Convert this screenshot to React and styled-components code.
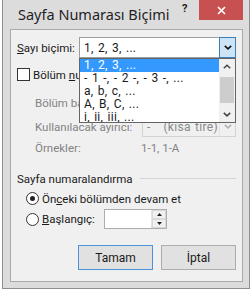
import React from 'react';
import styled, { createGlobalStyle } from 'styled-components';

const Global = createGlobalStyle`
  html, body { margin: 0; padding: 0; background: #ffffff; }
  body {
    width: 251px; height: 289px; overflow: hidden;
    font-family: Roboto, "Noto Sans", sans-serif;
    font-size: 11.5px; color: #1a1a1a;
  }
  * { box-sizing: border-box; }
`;

const Window = styled.div`
  margin-left: 2px;
  width: 248px;
  height: 289px;
  border: 1px solid #8e8e8e;
  border-top: none;
  background: #dcdcdc;
  padding: 0 6px 6px 7px;
  display: flex;
  flex-direction: column;
`;

const TitleBar = styled.div`
  height: 29px;
  display: flex;
  align-items: flex-start;
`;

const Title = styled.div`
  flex: 1;
  padding: 5px 0 0 8px;
  font-family: "Noto Sans", sans-serif;
  font-size: 14.5px;
  color: #1f1f1f;
  line-height: 18px;
`;

const HelpGlyph = styled.div`
  width: 17px;
  padding-top: 2px;
  font-size: 11px;
  font-weight: 700;
  color: #222;
`;

const CloseBtn = styled.div`
  width: 44px;
  height: 20px;
  background: #c75050;
  display: flex;
  align-items: center;
  justify-content: center;
`;

const Client = styled.div`
  flex: 1;
  border: 1px solid #a9a9a9;
  background: #f0f0f0;
  padding: 0 6px 0 6px;
  display: flex;
  flex-direction: column;
`;

const Row = styled.div`
  position: relative;
  display: flex;
  align-items: center;
  margin-top: ${p => p.$top}px;
  height: ${p => p.$h}px;
  padding-left: ${p => p.$indent || 0}px;
  color: ${p => (p.$disabled ? '#838383' : '#1a1a1a')};
  white-space: nowrap;
`;

const Label = styled.div`
  width: ${p => p.$w}px;
  flex: none;
`;

const Combo = styled.div`
  position: relative;
  width: ${p => p.$w}px;
  height: 21px;
  flex: none;
  display: flex;
  border: 1px solid ${p => (p.$disabled ? '#d3d3d3' : '#9e9e9e')};
  background: ${p => (p.$disabled ? '#f0f0f0' : '#ffffff')};
  color: ${p => (p.$disabled ? '#8a8a8a' : '#1a1a1a')};
  margin-left: auto;
  font-size: 12px;
`;

const ComboText = styled.div`
  flex: 1;
  padding-left: 4px;
  display: flex;
  align-items: center;
  white-space: pre;
  letter-spacing: 0.3px;
  word-spacing: 1px;
`;

const ComboButton = styled.div`
  width: 17px;
  margin: -1px -1px -1px 0;
  display: flex;
  align-items: center;
  justify-content: center;
  background: ${p => (p.$active ? '#cde4f7' : 'transparent')};
  border: 1px solid ${p => (p.$active ? '#3d7fb7' : 'transparent')};
  border-left: 1px solid ${p => (p.$active ? '#3d7fb7' : '#e3e3e3')};
`;

const DropList = styled.div`
  position: absolute;
  left: -1px;
  top: 20px;
  width: 157px;
  height: 65px;
  border: 1px solid #646464;
  background: #ffffff;
  display: flex;
  z-index: 5;
`;

const Items = styled.div`
  flex: 1;
  overflow: hidden;
  display: flex;
  flex-direction: column;
`;

const Item = styled.div`
  height: 13px;
  line-height: 13px;
  padding-left: 4px;
  flex: none;
  letter-spacing: 0.3px;
  word-spacing: 1px;
  background: ${p => (p.$sel ? '#3399ff' : 'transparent')};
  color: ${p => (p.$sel ? '#ffffff' : '#1a1a1a')};
`;

const ScrollBar = styled.div`
  width: 16px;
  background: #f0f0f0;
  display: flex;
  flex-direction: column;
  align-items: center;
`;

const ScrollArrow = styled.div`
  height: 15px;
  width: 100%;
  display: flex;
  align-items: center;
  justify-content: center;
  margin-top: ${p => (p.$bottom ? 'auto' : '0')};
`;

const Thumb = styled.div`
  width: 14px;
  height: 26px;
  margin-top: 3px;
  background: #cdcdcd;
`;

const Check = styled.div`
  width: 13px;
  height: 13px;
  border: 1px solid #333;
  background: #fff;
  margin-right: 3px;
  flex: none;
`;

const Radio = styled.div`
  width: 13px;
  height: 13px;
  border-radius: 50%;
  border: 1px solid #333;
  background: #fff;
  margin-right: 3px;
  flex: none;
  display: flex;
  align-items: center;
  justify-content: center;
  &::after {
    content: '';
    display: ${p => (p.$on ? 'block' : 'none')};
    width: 5px;
    height: 5px;
    border-radius: 50%;
    background: #222;
  }
`;

const GroupLine = styled.div`
  flex: 1;
  height: 1px;
  background: #d5d5d5;
  margin-left: 7px;
`;

const Spinner = styled.div`
  width: 63px;
  height: 20px;
  border: 1px solid #abadb3;
  background: #fff;
  display: flex;
  justify-content: flex-end;
`;

const SpinButtons = styled.div`
  width: 15px;
  display: flex;
  flex-direction: column;
  border-left: 1px solid #e3e3e3;
`;

const SpinBtn = styled.div`
  flex: 1;
  display: flex;
  align-items: center;
  justify-content: center;
  background: #f0f0f0;
  border: 1px solid #d9d9d9;
`;

const Buttons = styled.div`
  margin-top: auto;
  margin-bottom: 11px;
  display: flex;
  justify-content: flex-end;
  gap: 8px;
`;

const Button = styled.div`
  width: 75px;
  height: 25px;
  display: flex;
  align-items: center;
  justify-content: center;
  background: #e1e1e1;
  border: 1px solid ${p => (p.$default ? '#4d93d9' : '#adadad')};
  color: #1a1a1a;
  font-size: 12px;
`;

const U = styled.span`
  text-decoration: underline;
  text-underline-offset: 1px;
`;

const Chevron = ({ color = '#111' }) => (
  <svg width="8" height="5" viewBox="0 0 8 5">
    <path d="M0.8 0.8 L4 3.8 L7.2 0.8" fill="none" stroke={color} strokeWidth="1.6" />
  </svg>
);

const ChevronUp = ({ color = '#444' }) => (
  <svg width="8" height="5" viewBox="0 0 8 5">
    <path d="M0.8 4.2 L4 1.2 L7.2 4.2" fill="none" stroke={color} strokeWidth="1.4" />
  </svg>
);

const Tri = ({ up }) => (
  <svg width="5" height="3" viewBox="0 0 5 3">
    <path d={up ? 'M0 3 L2.5 0 L5 3 Z' : 'M0 0 L2.5 3 L5 0 Z'} fill="#222" />
  </svg>
);

const options = ['1, 2, 3, ...', '- 1 -, - 2 -, - 3 -, ...', 'a, b, c, ...', 'A, B, C, ...', 'i, ii, iii, ...'];

export default function App() {
  return (
    <>
      <Global />
      <Window>
        <TitleBar>
          <Title>Sayfa Numarası Biçimi</Title>
          <HelpGlyph>?</HelpGlyph>
          <CloseBtn>
            <svg width="9" height="9" viewBox="0 0 9 9">
              <path d="M1 1 L8 8 M8 1 L1 8" stroke="#fff" strokeWidth="1.7" />
            </svg>
          </CloseBtn>
        </TitleBar>
        <Client>
          <Row $top={7} $h={21}>
            <Label $w={61}><U>S</U>ayı biçimi:</Label>
            <Combo $w={157}>
              <ComboText>1, 2, 3, ...</ComboText>
              <ComboButton $active><Chevron /></ComboButton>
              <DropList>
                <Items>
                  {options.map((o, i) => (
                    <Item key={o} $sel={i === 0}>{o}</Item>
                  ))}
                </Items>
                <ScrollBar>
                  <ScrollArrow><ChevronUp /></ScrollArrow>
                  <Thumb />
                  <ScrollArrow $bottom><Chevron color="#444" /></ScrollArrow>
                </ScrollBar>
              </DropList>
            </Combo>
          </Row>
          <Row $top={10} $h={13}>
            <Check />
            <span>Bölüm <U>n</U>umarası ekle</span>
          </Row>
          <Row $top={11} $h={21} $indent={18} $disabled>
            <Label $w={106}>Bölüm başlangıcı stili:</Label>
          </Row>
          <Row $top={3} $h={21} $indent={18} $disabled>
            <Label $w={106}>Kullanılacak ayırıcı:</Label>
            <Combo $w={94} $disabled>
              <ComboText>{'-   (kısa tire)'}</ComboText>
              <ComboButton><Chevron color="#b5b5b5" /></ComboButton>
            </Combo>
          </Row>
          <Row $top={3} $h={15} $indent={18} $disabled>
            <Label $w={106}>Örnekler:</Label>
            <span>1-1, 1-A</span>
          </Row>
          <Row $top={16} $h={15}>
            <span>Sayfa numaralandırma</span>
            <GroupLine />
          </Row>
          <Row $top={5} $h={15} $indent={9}>
            <Radio $on />
            <span>Ön<U>c</U>eki bölümden devam et</span>
          </Row>
          <Row $top={3} $h={20} $indent={9}>
            <Radio />
            <Label $w={62}><U>B</U>aşlangıç:</Label>
            <Spinner>
              <SpinButtons>
                <SpinBtn><Tri up /></SpinBtn>
                <SpinBtn><Tri /></SpinBtn>
              </SpinButtons>
            </Spinner>
          </Row>
          <Buttons>
            <Button $default>Tamam</Button>
            <Button>İptal</Button>
          </Buttons>
        </Client>
      </Window>
    </>
  );
}
